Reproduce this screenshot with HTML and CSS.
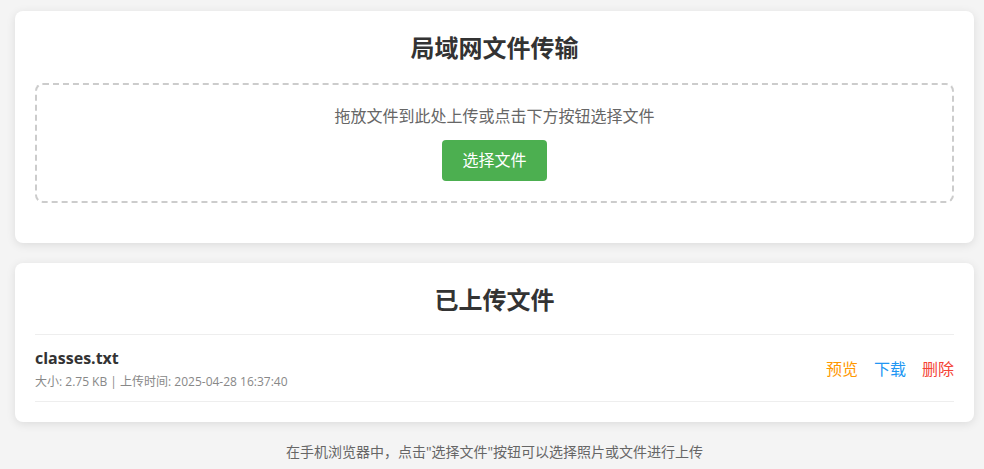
FILE: index.html
```html
<!DOCTYPE html>
<html lang="zh-CN">
<head>
<meta charset="UTF-8">
<title>局域网文件传输</title>
<link rel="stylesheet" href="styles.css">
</head>
<body>
<div class="page">
  <section class="card">
    <h1 class="card-title">局域网文件传输</h1>
    <div class="dropzone">
      <p class="drop-hint">拖放文件到此处上传或点击下方按钮选择文件</p>
      <button class="btn-select" type="button">选择文件</button>
    </div>
  </section>
  <section class="card card-files">
    <h2 class="card-title">已上传文件</h2>
    <ul class="file-list">
      <li class="file-item">
        <div class="file-info">
          <div class="file-name">classes.txt</div>
          <div class="file-meta">大小: 2.75 KB | 上传时间: 2025-04-28 16:37:40</div>
        </div>
        <div class="file-actions">
          <a class="act act-preview">预览</a>
          <a class="act act-download">下载</a>
          <a class="act act-delete">删除</a>
        </div>
      </li>
    </ul>
  </section>
  <p class="footer-note">在手机浏览器中，点击"选择文件"按钮可以选择照片或文件进行上传</p>
</div>
</body>
</html>
```

FILE: styles.css
```css
* { box-sizing: border-box; }
html, body { margin: 0; padding: 0; }
body {
  background: #f4f4f4;
  font-family: "Open Sans", "Noto Sans CJK SC", sans-serif;
  color: #333;
}
.page {
  padding: 11px 10px 0 15px;
}
.card {
  background: #fff;
  border-radius: 8px;
  box-shadow: 0 2px 10px rgba(0, 0, 0, 0.1);
  padding: 20px;
  margin-bottom: 20px;
}
.card-title {
  margin: 0 0 18px;
  font-size: 24px;
  line-height: 34px;
  font-weight: 700;
  text-align: center;
  color: #333;
}
.dropzone {
  border: 2px dashed #ccc;
  border-radius: 8px;
  padding: 20px;
  text-align: center;
  margin-bottom: 20px;
}
.drop-hint {
  margin: 0 0 13px;
  font-size: 16px;
  line-height: 22px;
  color: #666;
}
.btn-select {
  background: #4CAF50;
  color: #fff;
  border: none;
  border-radius: 4px;
  padding: 10px 20px;
  font-family: inherit;
  font-size: 16px;
  line-height: 21px;
}
.card-files { margin-bottom: 20px; }
.card-files .card-title { margin-bottom: 17px; }
.file-list {
  list-style: none;
  margin: 0;
  padding: 0;
  border-top: 1px solid #eee;
}
.file-item {
  display: flex;
  align-items: center;
  justify-content: space-between;
  padding: 12px 0 10px;
  border-bottom: 1px solid #eee;
}
.file-name {
  font-size: 16px;
  line-height: 22px;
  font-weight: 700;
  color: #333;
  margin-bottom: 4px;
}
.file-meta {
  font-size: 12px;
  line-height: 18px;
  color: #888;
}
.file-actions {
  display: flex;
  gap: 16px;
}
.act {
  font-size: 16px;
  line-height: 22px;
  cursor: pointer;
}
.act-preview { color: #FF9800; }
.act-download { color: #2196F3; }
.act-delete { color: #f44336; }
.footer-note {
  margin: 0;
  text-align: center;
  font-size: 14px;
  line-height: 20px;
  color: #666;
}
```
